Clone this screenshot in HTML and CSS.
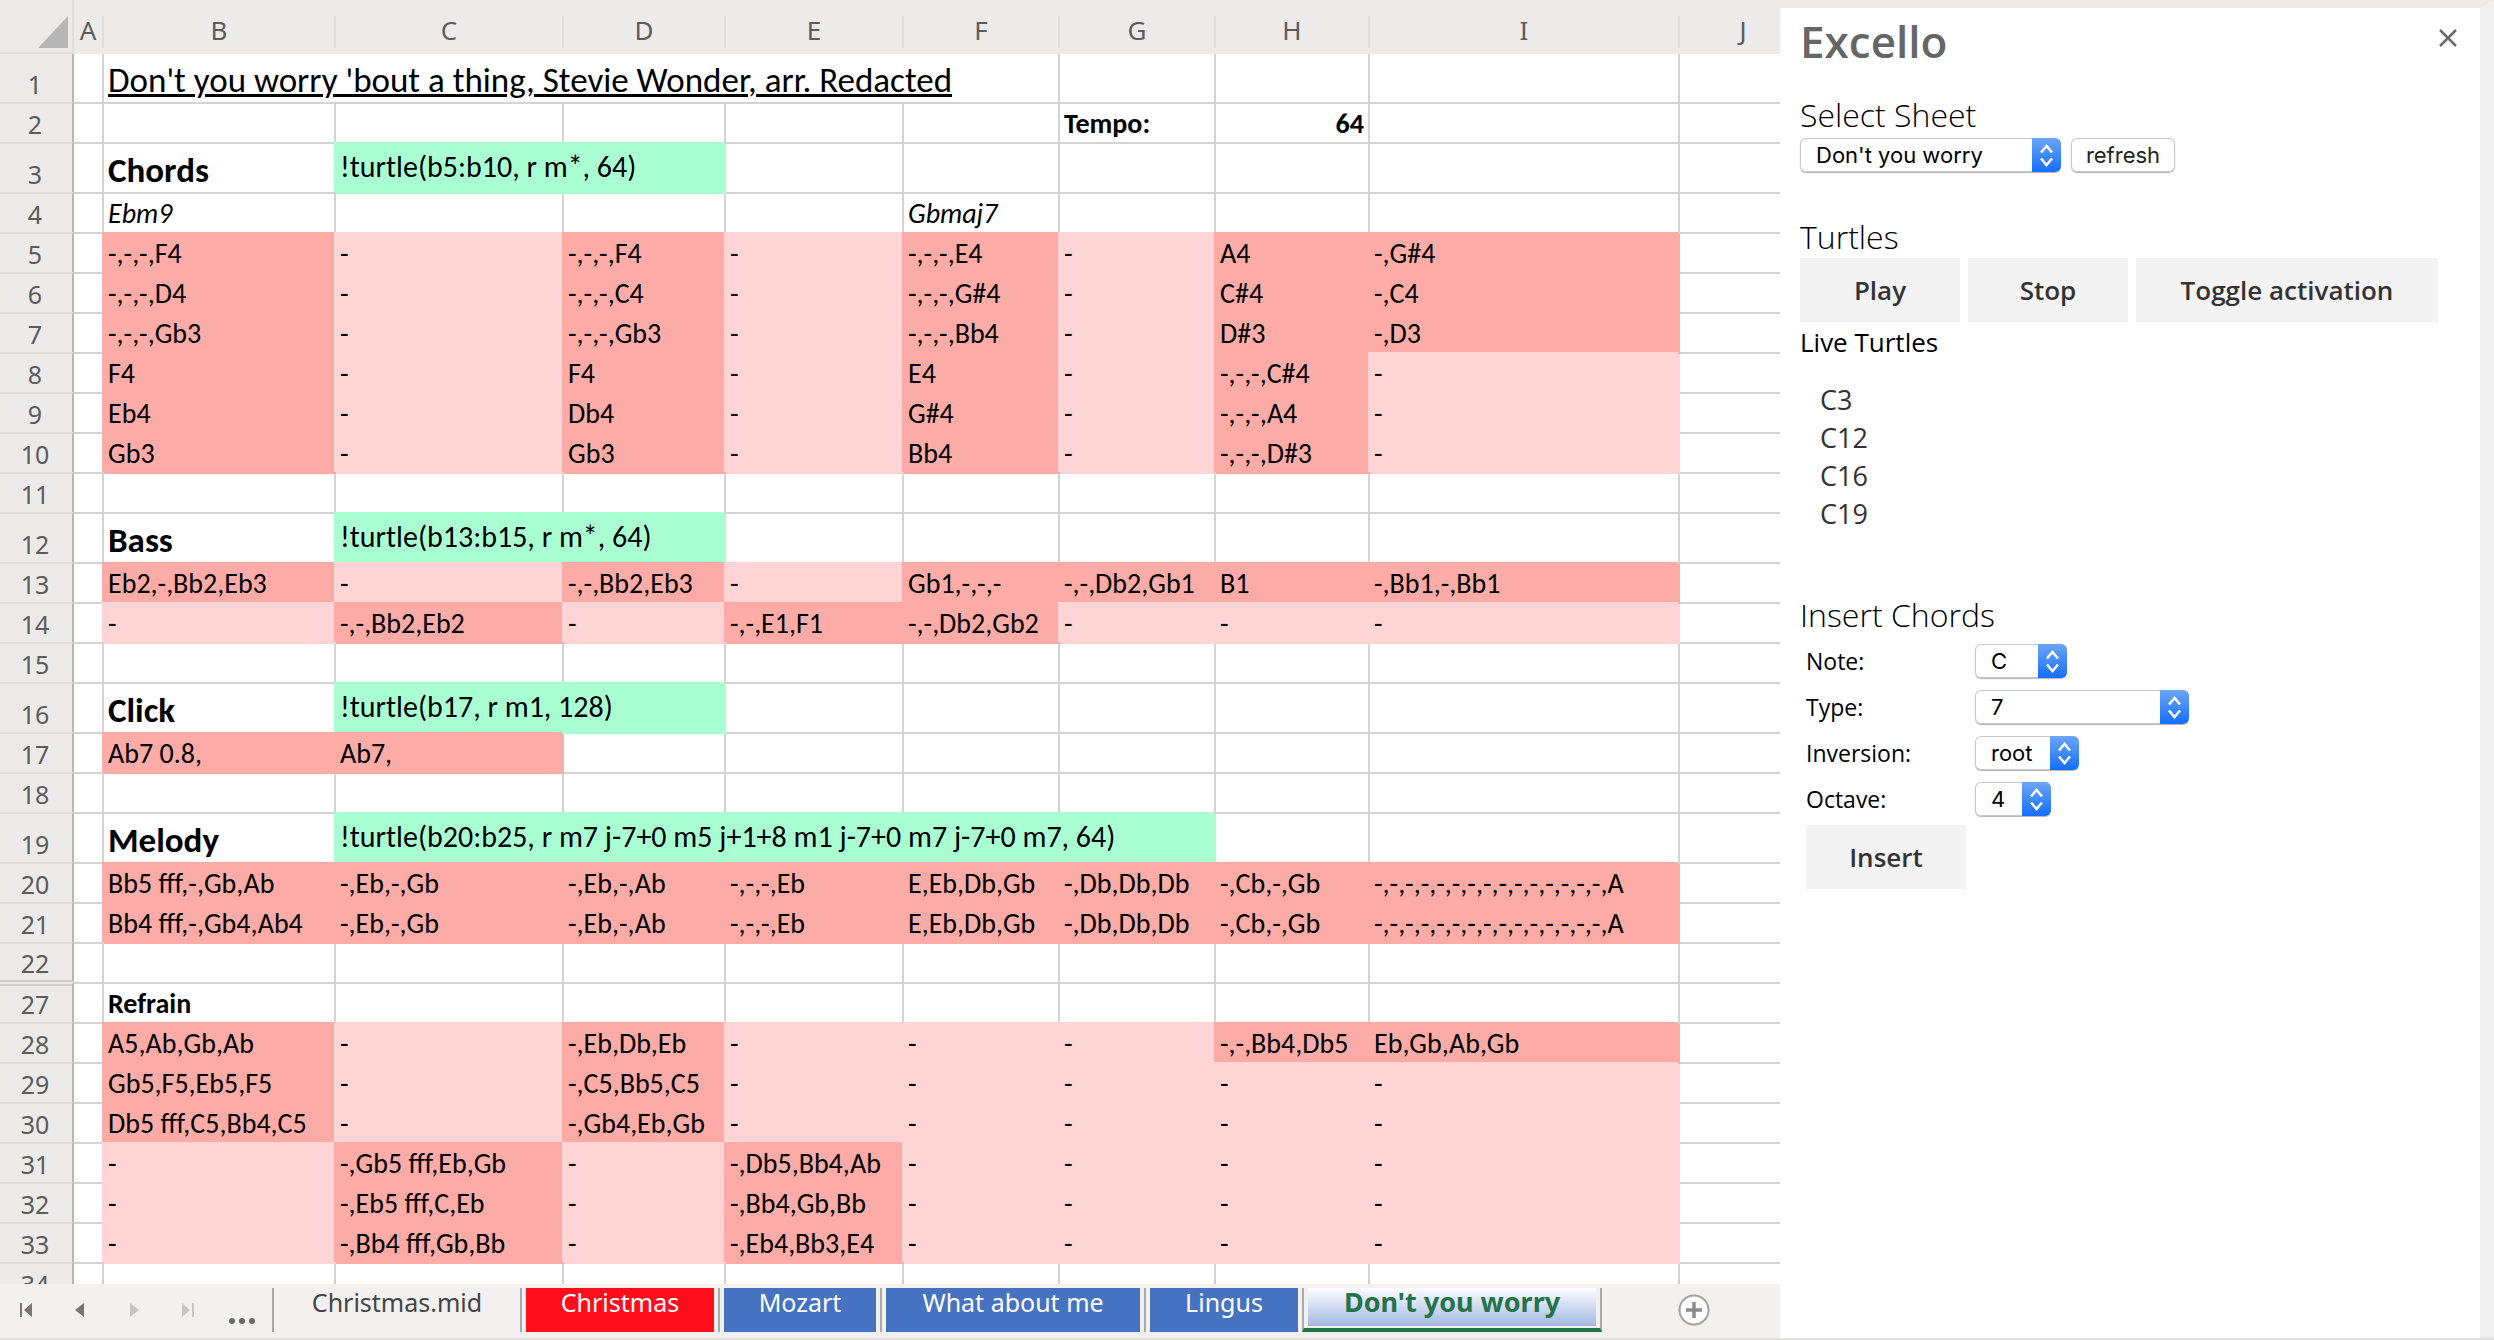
FILE: index.html
```html
<!DOCTYPE html>
<html lang="en">
<head>
<meta charset="utf-8">
<title>Excello</title>
<link rel="stylesheet" href="styles.css">
</head>
<body>
<svg class="defs" aria-hidden="true">
  <symbol id="stepper" viewBox="0 0 29 34"><path d="M9 14.500l5.500-6.500 5.500 6.500M9 20.500l5.500 6.500 5.500-6.500" fill="none" stroke="#fff" stroke-width="2.500"/></symbol>
</svg>
<div class="app">
<main class="workbook">
<div class="grid-view">
<table class="sheet">
<colgroup><col class="w-num"><col class="w-a"><col class="w-b"><col class="w-c"><col class="w-d"><col class="w-e"><col class="w-f"><col class="w-g"><col class="w-h"><col class="w-i"><col></colgroup>
<thead>
<tr><th class="corner"><svg width="30" height="32" viewBox="0 0 30 32"><path d="M30 0v32H0z" fill="#b6b6b6"/></svg></th><th class="narrow"><span>A</span></th><th><span>B</span></th><th><span>C</span></th><th><span>D</span></th><th><span>E</span></th><th><span>F</span></th><th><span>G</span></th><th><span>H</span></th><th><span>I</span></th><th class="last"><span>J</span></th></tr>
</thead>
<tbody>
<tr class="first"><th>1</th><td></td><td colspan="5" class="title">Don't you worry 'bout a thing, Stevie Wonder, arr. Redacted</td><td></td><td></td><td></td><td></td></tr>
<tr><th>2</th><td></td><td></td><td></td><td></td><td></td><td></td><td class="b">Tempo:</td><td class="b num">64</td><td></td><td></td></tr>
<tr class="tall"><th>3</th><td></td><td class="name">Chords</td><td colspan="2" class="g">!turtle(b5:b10, r m*, 64)</td><td></td><td></td><td></td><td></td><td></td><td></td></tr>
<tr><th>4</th><td></td><td class="i">Ebm9</td><td></td><td></td><td></td><td class="i">Gbmaj7</td><td></td><td></td><td></td><td></td></tr>
<tr><th>5</th><td></td><td class="d">-,-,-,F4</td><td class="l">-</td><td class="d">-,-,-,F4</td><td class="l">-</td><td class="d">-,-,-,E4</td><td class="l">-</td><td class="d">A4</td><td class="d">-,G#4</td><td></td></tr>
<tr><th>6</th><td></td><td class="d">-,-,-,D4</td><td class="l">-</td><td class="d">-,-,-,C4</td><td class="l">-</td><td class="d">-,-,-,G#4</td><td class="l">-</td><td class="d">C#4</td><td class="d">-,C4</td><td></td></tr>
<tr><th>7</th><td></td><td class="d">-,-,-,Gb3</td><td class="l">-</td><td class="d">-,-,-,Gb3</td><td class="l">-</td><td class="d">-,-,-,Bb4</td><td class="l">-</td><td class="d">D#3</td><td class="d">-,D3</td><td></td></tr>
<tr><th>8</th><td></td><td class="d">F4</td><td class="l">-</td><td class="d">F4</td><td class="l">-</td><td class="d">E4</td><td class="l">-</td><td class="d">-,-,-,C#4</td><td class="l">-</td><td></td></tr>
<tr><th>9</th><td></td><td class="d">Eb4</td><td class="l">-</td><td class="d">Db4</td><td class="l">-</td><td class="d">G#4</td><td class="l">-</td><td class="d">-,-,-,A4</td><td class="l">-</td><td></td></tr>
<tr><th>10</th><td></td><td class="d">Gb3</td><td class="l">-</td><td class="d">Gb3</td><td class="l">-</td><td class="d">Bb4</td><td class="l">-</td><td class="d">-,-,-,D#3</td><td class="l">-</td><td></td></tr>
<tr><th>11</th><td></td><td></td><td></td><td></td><td></td><td></td><td></td><td></td><td></td><td></td></tr>
<tr class="tall"><th>12</th><td></td><td class="name">Bass</td><td colspan="2" class="g">!turtle(b13:b15, r m*, 64)</td><td></td><td></td><td></td><td></td><td></td><td></td></tr>
<tr><th>13</th><td></td><td class="d">Eb2,-,Bb2,Eb3</td><td class="l">-</td><td class="d">-,-,Bb2,Eb3</td><td class="l">-</td><td class="d">Gb1,-,-,-</td><td class="d">-,-,Db2,Gb1</td><td class="d">B1</td><td class="d">-,Bb1,-,Bb1</td><td></td></tr>
<tr><th>14</th><td></td><td class="l">-</td><td class="d">-,-,Bb2,Eb2</td><td class="l">-</td><td class="d">-,-,E1,F1</td><td class="d">-,-,Db2,Gb2</td><td class="l">-</td><td class="l">-</td><td class="l">-</td><td></td></tr>
<tr><th>15</th><td></td><td></td><td></td><td></td><td></td><td></td><td></td><td></td><td></td><td></td></tr>
<tr class="tall"><th>16</th><td></td><td class="name">Click</td><td colspan="2" class="g">!turtle(b17, r m1, 128)</td><td></td><td></td><td></td><td></td><td></td><td></td></tr>
<tr><th>17</th><td></td><td class="d">Ab7 0.8,</td><td class="d">Ab7,</td><td></td><td></td><td></td><td></td><td></td><td></td><td></td></tr>
<tr><th>18</th><td></td><td></td><td></td><td></td><td></td><td></td><td></td><td></td><td></td><td></td></tr>
<tr class="tall"><th>19</th><td></td><td class="name">Melody</td><td colspan="5" class="g">!turtle(b20:b25, r m7 j-7+0 m5 j+1+8 m1 j-7+0 m7 j-7+0 m7, 64)</td><td></td><td></td><td></td></tr>
<tr><th>20</th><td></td><td class="d">Bb5 fff,-,Gb,Ab</td><td class="d">-,Eb,-,Gb</td><td class="d">-,Eb,-,Ab</td><td class="d">-,-,-,Eb</td><td class="d">E,Eb,Db,Gb</td><td class="d">-,Db,Db,Db</td><td class="d">-,Cb,-,Gb</td><td class="d">-,-,-,-,-,-,-,-,-,-,-,-,-,-,-,A</td><td></td></tr>
<tr><th>21</th><td></td><td class="d">Bb4 fff,-,Gb4,Ab4</td><td class="d">-,Eb,-,Gb</td><td class="d">-,Eb,-,Ab</td><td class="d">-,-,-,Eb</td><td class="d">E,Eb,Db,Gb</td><td class="d">-,Db,Db,Db</td><td class="d">-,Cb,-,Gb</td><td class="d">-,-,-,-,-,-,-,-,-,-,-,-,-,-,-,A</td><td></td></tr>
<tr class="before-hidden"><th>22</th><td></td><td></td><td></td><td></td><td></td><td></td><td></td><td></td><td></td><td></td></tr>
<tr class="after-hidden"><th>27</th><td></td><td class="b">Refrain</td><td></td><td></td><td></td><td></td><td></td><td></td><td></td><td></td></tr>
<tr><th>28</th><td></td><td class="d">A5,Ab,Gb,Ab</td><td class="l">-</td><td class="d">-,Eb,Db,Eb</td><td class="l">-</td><td class="l">-</td><td class="l">-</td><td class="d">-,-,Bb4,Db5</td><td class="d">Eb,Gb,Ab,Gb</td><td></td></tr>
<tr><th>29</th><td></td><td class="d">Gb5,F5,Eb5,F5</td><td class="l">-</td><td class="d">-,C5,Bb5,C5</td><td class="l">-</td><td class="l">-</td><td class="l">-</td><td class="l">-</td><td class="l">-</td><td></td></tr>
<tr><th>30</th><td></td><td class="d">Db5 fff,C5,Bb4,C5</td><td class="l">-</td><td class="d">-,Gb4,Eb,Gb</td><td class="l">-</td><td class="l">-</td><td class="l">-</td><td class="l">-</td><td class="l">-</td><td></td></tr>
<tr><th>31</th><td></td><td class="l">-</td><td class="d">-,Gb5 fff,Eb,Gb</td><td class="l">-</td><td class="d">-,Db5,Bb4,Ab</td><td class="l">-</td><td class="l">-</td><td class="l">-</td><td class="l">-</td><td></td></tr>
<tr><th>32</th><td></td><td class="l">-</td><td class="d">-,Eb5 fff,C,Eb</td><td class="l">-</td><td class="d">-,Bb4,Gb,Bb</td><td class="l">-</td><td class="l">-</td><td class="l">-</td><td class="l">-</td><td></td></tr>
<tr><th>33</th><td></td><td class="l">-</td><td class="d">-,Bb4 fff,Gb,Bb</td><td class="l">-</td><td class="d">-,Eb4,Bb3,E4</td><td class="l">-</td><td class="l">-</td><td class="l">-</td><td class="l">-</td><td></td></tr>
<tr><th>34</th><td></td><td></td><td></td><td></td><td></td><td></td><td></td><td></td><td></td><td></td></tr>
</tbody>
</table>
</div>
<nav class="tab-bar" aria-label="Sheets">
  <div class="tab-nav">
    <button aria-label="First sheet"><svg width="20" height="16" viewBox="0 0 20 16"><path d="M4 1h2v14H4zM16 1v14L8 8z" fill="#757575"/></svg></button>
    <button aria-label="Previous sheet"><svg width="20" height="16" viewBox="0 0 20 16"><path d="M14 1v14L5 8z" fill="#757575"/></svg></button>
    <button aria-label="Next sheet" disabled><svg width="20" height="16" viewBox="0 0 20 16"><path d="M6 1v14l9-7z" fill="#c6c6c6"/></svg></button>
    <button aria-label="Last sheet" disabled><svg width="20" height="16" viewBox="0 0 20 16"><path d="M4 1v14l8-7zM14 1h2v14h-2z" fill="#c6c6c6"/></svg></button>
    <button class="more" aria-label="More sheets"><svg width="28" height="8" viewBox="0 0 28 8"><g fill="#696969"><circle cx="4" cy="4" r="3"/><circle cx="14" cy="4" r="3"/><circle cx="24" cy="4" r="3"/></g></svg></button>
  </div>
  <div class="tabs">
    <button class="tab plain">Christmas.mid</button>
    <button class="tab red">Christmas</button>
    <button class="tab blue mozart">Mozart</button>
    <button class="tab blue about">What about me</button>
    <button class="tab blue lingus">Lingus</button>
    <button class="tab active"><span>Don't you worry</span></button>
  </div>
  <button class="add" aria-label="Add sheet"><svg width="32" height="32" viewBox="0 0 32 32"><circle cx="16" cy="16" r="14.500" fill="#fff" stroke="#a3a3a3" stroke-width="2"/><path d="M16 8v16M8 16h16" stroke="#8a8a8a" stroke-width="3.500"/></svg></button>
</nav>
</main>
<aside class="pane">
  <header class="pane-head">
    <h1>Excello</h1>
    <button class="close" aria-label="Close"><svg width="20" height="20" viewBox="0 0 20 20"><path d="M2 2l16 16M18 2L2 18" stroke="#6b6b6b" stroke-width="2.500"/></svg></button>
  </header>
  <section class="pick">
    <h2><label for="sheet">Select Sheet</label></h2>
    <div class="row">
      <span class="select w-sheet"><select id="sheet"><option>Don't you worry</option></select><svg><use href="#stepper"/></svg></span>
      <button class="refresh">refresh</button>
    </div>
  </section>
  <section class="turtles">
    <h2>Turtles</h2>
    <div class="row">
      <button class="action">Play</button>
      <button class="action">Stop</button>
      <button class="action wide">Toggle activation</button>
    </div>
    <h3>Live Turtles</h3>
    <ul><li>C3</li><li>C12</li><li>C16</li><li>C19</li></ul>
  </section>
  <section class="chords">
    <h2>Insert Chords</h2>
    <div class="form">
      <label for="note">Note:</label><span class="select w-note"><select id="note"><option>C</option></select><svg><use href="#stepper"/></svg></span>
      <label for="type">Type:</label><span class="select w-type"><select id="type"><option>7</option></select><svg><use href="#stepper"/></svg></span>
      <label for="inversion">Inversion:</label><span class="select w-inv"><select id="inversion"><option>root</option></select><svg><use href="#stepper"/></svg></span>
      <label for="octave">Octave:</label><span class="select w-oct"><select id="octave"><option>4</option></select><svg><use href="#stepper"/></svg></span>
    </div>
    <button class="action insert">Insert</button>
  </section>
</aside>
</div>
</body>
</html>
```
FILE: styles.css
```css
* { box-sizing: border-box; }
body { margin: 0; background: #fff; color: #000; font-family: "Open Sans", "Noto Sans", sans-serif; }
button, select { font: inherit; color: inherit; margin: 0; padding: 0; border: 0; background: none; }
h1, h2, h3, ul { margin: 0; padding: 0; font-weight: 400; }
.defs { display: none; }

.app { display: flex; height: 100vh; border-bottom: 2px solid #e1e0de; }
.workbook { flex: 1; min-width: 0; display: flex; flex-direction: column; }
.grid-view { flex: 1; min-height: 0; overflow: hidden; }

/* spreadsheet */
.sheet { width: 100%; table-layout: fixed; border-collapse: separate; border-spacing: 0; font-family: Carlito, Lato, sans-serif; font-size: 28px; line-height: 32px; }
.w-num { width: 74px; }
.w-a { width: 28px; }
.w-b { width: 232px; }
.w-c { width: 228px; }
.w-d { width: 162px; }
.w-e { width: 178px; }
.w-f, .w-g { width: 156px; }
.w-h { width: 154px; }
.w-i { width: 310px; }

.sheet th { padding: 0; background: #ecebe9; color: #5c5c5c; font-family: "Noto Sans", sans-serif; font-weight: 400; }
.sheet thead th { height: 54px; padding: 16px 0 6px; vertical-align: top; font-size: 26px; }
.sheet thead span { display: block; border-left: 2px solid #dfdedc; line-height: 28px; padding-bottom: 4px; }
.sheet thead .narrow span { border-left: 0; }
.sheet thead .last span { padding-left: 26px; }
.sheet thead .corner { padding: 16px 4px 0 0; border-right: 2px solid #dfdedc; border-bottom: 2px solid #dfdedc; text-align: right; }
.corner svg { display: block; margin-left: auto; }
.sheet tbody th { border-top: 2px solid #dfdedc; border-right: 2px solid #b5b5b5; font-size: 25px; vertical-align: bottom; padding: 0 2px 2px 0; }
.sheet td { height: 40px; padding: 0 4px 2px; border-top: 2px solid #d4d4d4; border-left: 2px solid #d4d4d4; vertical-align: bottom; white-space: nowrap; }
.sheet th + td { border-left: 0; }
.sheet .first td { height: 48px; border-top: 0; }
.sheet .first th { border-top: 0; }
.sheet .tall td { height: 50px; }
/* double rule in the row header where rows are hidden */
.sheet .before-hidden th { border-bottom: 2px solid #d0d0d0; line-height: 30px; }
.sheet .after-hidden th { border-top-color: #ecebe9; box-shadow: inset 0 2px #d0d0d0; }

.sheet .title { font-size: 35px; line-height: 42px; padding-bottom: 1px; text-decoration: underline; text-decoration-thickness: 3px; }
.sheet .name { font-size: 35px; line-height: 36px; padding-bottom: 4px; font-weight: 700; }
.b { font-weight: 700; }
.i { font-style: italic; }
.num { text-align: right; }
/* a fill also covers the grid lines on its right and lower edges */
.sheet .d, .sheet .l, .sheet .g { position: relative; border-color: var(--fill); background: var(--fill); box-shadow: 2px 2px 0 var(--fill); }
.d { --fill: #fdaba7; }
.l { --fill: #fed5d4; }
.g { --fill: #aaffd2; }
.sheet .g { font-size: 30px; line-height: 34px; padding-bottom: 8px; }

/* sheet tabs */
.tab-bar { height: 54px; display: flex; align-items: flex-start; padding: 4px 70px 0 16px; background: #f2f1ef; font-family: "Noto Sans", sans-serif; font-size: 25px; }
.tab-nav { width: 256px; height: 44px; display: flex; align-items: center; gap: 34px; }
.tab-nav button { width: 20px; height: 16px; }
.tab-nav svg { display: block; }
.tab-nav .more { width: 28px; height: 8px; margin: 22px 0 0 -4px; }
.tabs { flex: 1; display: flex; }
.tab { height: 44px; padding-bottom: 16px; border-left: 2px solid #a9a9a9; box-shadow: inset 4px 0 #f2f1ef, inset -4px 0 #f2f1ef; line-height: 28px; color: #fff; }
.plain { width: 248px; color: #454545; }
.red { width: 198px; background-color: #ff0d1b; }
.blue { background-color: #4673c1; }
.mozart { width: 162px; }
.about { width: 264px; }
.lingus { width: 158px; }
.active { width: 300px; padding: 0 4px; border-right: 2px solid #a9a9a9; border-bottom: 4px solid #24734a; color: #24734a; font-size: 27px; font-weight: 700; }
.active span { display: block; height: 38px; margin-bottom: 2px; background: linear-gradient(#fdfdff, #a2b8e0); }
.add { margin-top: 6px; }
.add svg { display: block; }

/* task pane */
.pane { width: 714px; padding: 0 42px 0 20px; border-top: 8px solid #ecebe9; border-right: 14px solid #f0f0f0; }
.pane-head { display: flex; justify-content: space-between; height: 84px; }
h1 { font-size: 44px; line-height: 66px; font-weight: 600; color: #666; }
.close { width: 20px; height: 20px; margin: 20px -20px 0 0; }
.close svg { display: block; }
h2 { font-size: 32px; line-height: 42px; font-weight: 300; }
.row { display: flex; gap: 8px; }
.pick { height: 124px; }
.pick h2 { line-height: 46px; }
.pick .row { gap: 10px; align-items: center; }
.select { display: inline-grid; height: 34px; border-radius: 6px; box-shadow: inset 0 0 0 1px #c8c8c8, 0 1px 1px #b5b5b5; overflow: hidden; }
.select > * { grid-area: 1 / 1; }
.select select { width: 100%; appearance: none; padding-left: 16px; font-family: Inter, sans-serif; font-size: 22px; line-height: 34px; border-radius: 6px; }
.select svg { justify-self: end; width: 29px; height: 34px; pointer-events: none; background: linear-gradient(#6ba6f8, #156efd); }
.w-sheet { width: 261px; }
.refresh { width: 104px; height: 34px; border-radius: 6px; font-family: Inter, sans-serif; font-size: 22px; line-height: 32px; color: #222; box-shadow: inset 0 0 0 1px #c8c8c8, 0 1px 1px #b5b5b5; }
.turtles { height: 378px; }
.action { width: 160px; height: 64px; background: #f3f3f3; color: #333; font-size: 26px; font-weight: 600; }
.wide { width: 302px; }
h3 { font-size: 26px; line-height: 40px; }
.turtles ul { padding: 19px 0 0 20px; list-style: none; font-size: 27px; line-height: 38px; color: #333; }
.form { display: grid; grid-template-columns: 169px max-content; row-gap: 12px; padding: 8px 0 9px 6px; align-items: center; font-size: 23px; line-height: 34px; }
.w-note { width: 92px; }
.w-type { width: 214px; }
.w-inv { width: 104px; }
.w-oct { width: 76px; }
.insert { margin-left: 6px; }
```
